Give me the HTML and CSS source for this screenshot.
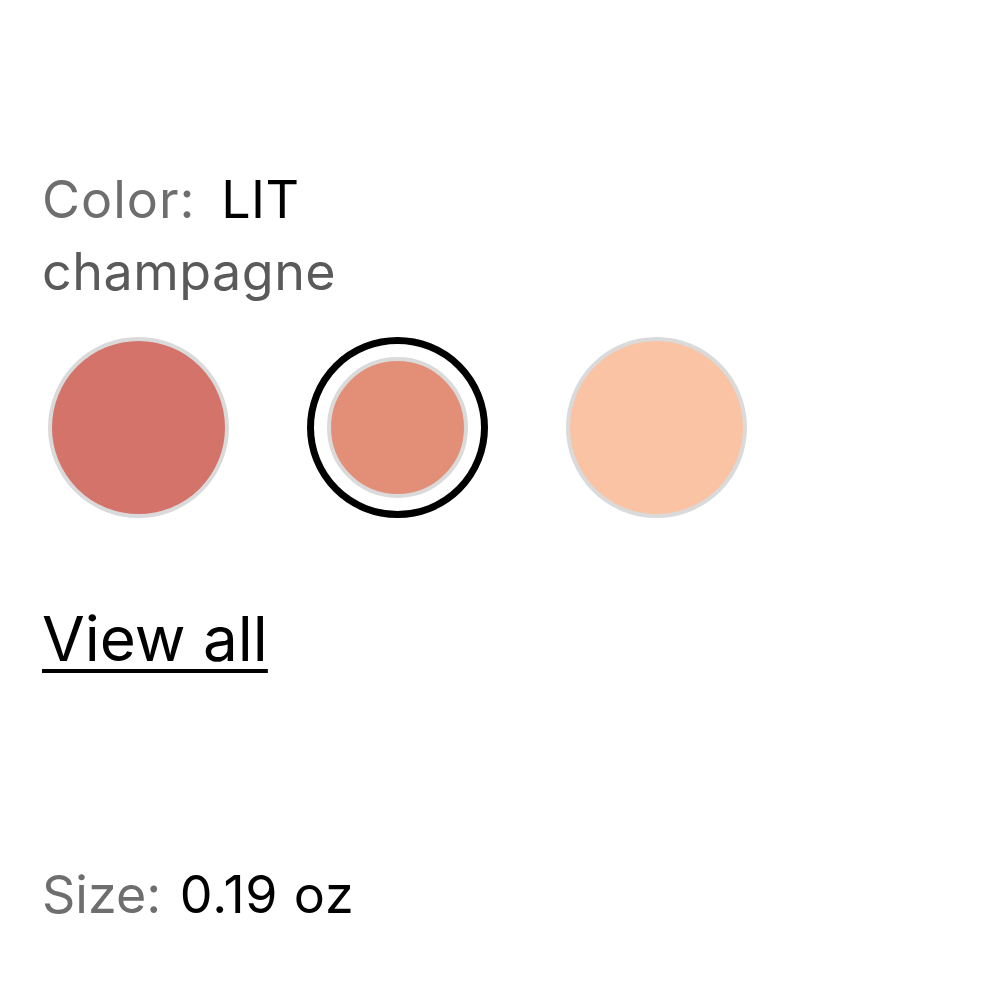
FILE: index.html
```html
<!DOCTYPE html>
<html lang="en">
<head>
<meta charset="utf-8">
<title>Color selector</title>
<link rel="stylesheet" href="styles.css">
</head>
<body>
<main class="product">
  <section class="color">
    <p class="color-label"><span class="label">Color:</span> <span class="value">LIT</span></p>
    <p class="color-name">champagne</p>
    <div class="swatches">
      <button class="swatch" aria-label="Shade 1"><span class="chip chip-rose"></span></button>
      <button class="swatch selected" aria-label="LIT champagne"><span class="chip chip-champagne"></span></button>
      <button class="swatch" aria-label="Shade 3"><span class="chip chip-peach"></span></button>
    </div>
    <a class="view-all" href="#">View all</a>
  </section>
  <section class="size">
    <p class="size-label"><span class="label">Size:</span> <span class="value">0.19 oz</span></p>
  </section>
</main>
</body>
</html>
```

FILE: styles.css
```css
html, body {
  margin: 0;
  padding: 0;
  background: #ffffff;
}

body {
  font-family: Inter, "Noto Sans", "Liberation Sans", sans-serif;
  color: #000;
}

.product {
  padding: 164px 0 0 42px;
}

.color-label,
.color-name,
.size-label {
  margin: 0;
  font-size: 52px;
  line-height: 72px;
}

.label {
  color: #6e6e6e;
}

.color-label .label {
  letter-spacing: 1px;
}

.value {
  color: #000;
}

.color-label .value {
  margin-left: 11px;
  letter-spacing: 0.5px;
}

.color-name {
  color: #5a5a5a;
  letter-spacing: 0.5px;
}

.size-label .value {
  letter-spacing: 0.8px;
  margin-left: 4px;
}

.swatches {
  display: flex;
  gap: 78px;
  margin: 29px 0 0 6px;
}

.swatch {
  width: 181px;
  height: 181px;
  padding: 0;
  border: 7px solid transparent;
  border-radius: 50%;
  background: none;
  display: flex;
  align-items: center;
  justify-content: center;
  box-sizing: border-box;
}

.swatch .chip {
  width: 181px;
  height: 181px;
  flex: none;
  border-radius: 50%;
  border: 4px solid #dadada;
  box-sizing: border-box;
}

.swatch.selected {
  border-color: #000;
}

.swatch.selected .chip {
  width: 141px;
  height: 141px;
}

.chip-rose { background: #d4736a; }
.chip-champagne { background: #e38f78; }
.chip-peach { background: #fac3a3; }

.view-all {
  display: inline-block;
  margin-top: 85px;
  font-size: 62px;
  line-height: 72px;
  color: #000;
  text-decoration: underline;
  text-decoration-thickness: 4px;
  text-underline-offset: 8px;
}

.size {
  margin-top: 184px;
}
```
